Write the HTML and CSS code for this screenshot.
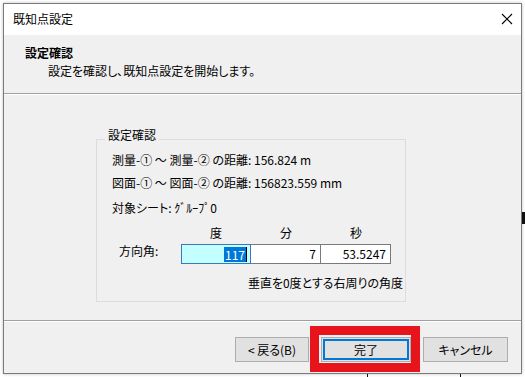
FILE: index.html
```html
<!DOCTYPE html>
<html lang="ja">
<head>
    <meta charset="UTF-8">
    <meta name="viewport" content="width=device-width, initial-scale=1.0">
    <title>既知点設定</title>
    <link rel="stylesheet" href="styles.css">
</head>
<body>
    <div class="desk-mark mark-right"></div>
    <div class="desk-mark mark-b1"></div>
    <div class="desk-mark mark-b2"></div>

    <div class="window">
        <div class="titlebar">
            <span class="title">既知点設定</span>
            <svg class="close" width="12" height="12" viewBox="0 0 12 12">
                <path d="M1 1 L11 11 M11 1 L1 11" stroke="#000" stroke-width="1.1" fill="none"/>
            </svg>
        </div>

        <div class="header">
            <div class="header-title">設定確認</div>
            <div class="header-sub">設定を確認し、既知点設定を開始します。</div>
        </div>

        <div class="content">
            <div class="group">
                <span class="legend">設定確認</span>
                <div class="row row1">測量-① ～ 測量-② の距離: 156.824 m</div>
                <div class="row row2">図面-① ～ 図面-② の距離: 156823.559 mm</div>
                <div class="row row3">対象シート: ｸﾞﾙｰﾌﾟ0</div>

                <div class="angle-grid">
                    <span></span>
                    <span class="col-head">度</span>
                    <span class="col-head">分</span>
                    <span class="col-head">秒</span>

                    <span class="angle-label">方向角:</span>
                    <div class="field field-active"><span class="sel">117</span><span class="caret"></span></div>
                    <div class="field">7</div>
                    <div class="field">53.5247</div>
                </div>

                <div class="note">垂直を0度とする右周りの角度</div>
            </div>
        </div>

        <div class="footer">
            <button class="btn btn-back">&lt; 戻る(B)</button>
            <div class="done-wrap">
                <button class="btn btn-done">完了</button>
                <div class="highlight"></div>
            </div>
            <button class="btn btn-cancel">キャンセル</button>
        </div>
    </div>
</body>
</html>
```

FILE: styles.css
```css
body {
    margin: 0;
    background: #fff;
    font-family: "Noto Sans CJK JP", "Noto Sans", sans-serif;
    font-size: 12px;
    font-feature-settings: "palt";
    color: #000;
    position: relative;
    height: 377px;
    overflow: hidden;
}
.desk-mark {
    position: absolute;
    background: #111;
}
.mark-right {
    left: 521px;
    top: 212px;
    width: 4px;
    height: 12px;
}
.mark-b1 {
    left: 367px;
    top: 373px;
    width: 1px;
    height: 4px;
}
.mark-b2 {
    left: 460px;
    top: 373px;
    width: 1px;
    height: 4px;
}
.window {
    position: relative;
    margin: 3px 0 0 3px;
    width: 517px;
    height: 369px;
    border: 1px solid #7a7a7a;
    background: #f0f0f0;
    box-shadow: 0 0 3px rgba(0, 0, 0, 0.25);
    display: flex;
    flex-direction: column;
}
.titlebar {
    height: 31px;
    flex-shrink: 0;
    background: #fff;
    display: flex;
    align-items: center;
    justify-content: space-between;
    padding: 0 8px 0 9px;
}
.title {
    line-height: 16px;
    margin-top: -2px;
}
.close {
    margin-top: -2px;
}
.header {
    height: 59px;
    flex-shrink: 0;
    box-sizing: border-box;
    padding: 10px 0 0 21px;
    border-bottom: 1px solid #a0a0a0;
    box-shadow: 0 1px 0 #fff;
}
.header-title {
    font-weight: bold;
    line-height: 16px;
}
.header-sub {
    line-height: 16px;
    margin: 2px 0 0 23px;
}
.content {
    flex: 1;
    padding-top: 45px;
}
.group {
    margin-left: 92px;
    width: 310px;
    height: 163px;
    box-sizing: border-box;
    border: 1px solid #dcdcdc;
    display: flex;
    flex-direction: column;
}
.legend {
    align-self: flex-start;
    margin: -12px 0 0 8px;
    padding: 0 3px;
    background: #f0f0f0;
    line-height: 14px;
}
.row {
    line-height: 16px;
    padding-left: 15px;
}
.row1 {
    margin-top: 10px;
}
.row2 {
    margin-top: 7px;
}
.row3 {
    margin-top: 9px;
}
.angle-grid {
    display: grid;
    grid-template-columns: 62px 70px 70px 70px;
    grid-template-rows: 16px 20px;
    row-gap: 3px;
    margin: 9px 0 0 22px;
}
.col-head {
    text-align: center;
    line-height: 16px;
}
.angle-label {
    line-height: 20px;
    margin-top: -3px;
}
.field {
    box-sizing: border-box;
    height: 20px;
    border: 1px solid #7a7a7a;
    background: #fff;
    padding-right: 4px;
    line-height: 18px;
    display: flex;
    justify-content: flex-end;
    align-items: center;
}
.field + .field {
    border-left: none;
}
.field-active {
    background: #c4ffff;
    border-color: #3a78c0;
    padding-right: 3px;
}
.sel {
    background: #0078d7;
    color: #fff;
    line-height: 15px;
    padding: 0 1px;
}
.caret {
    width: 1px;
    height: 15px;
    background: #000;
}
.note {
    line-height: 16px;
    margin-top: 11px;
    padding-right: 2px;
    text-align: right;
    white-space: nowrap;
}
.footer {
    height: 53px;
    flex-shrink: 0;
    box-sizing: border-box;
    border-top: 1px solid #a0a0a0;
    box-shadow: inset 0 1px 0 #fff;
    display: flex;
    justify-content: flex-end;
    align-items: flex-start;
    gap: 12px;
    padding: 16px 13px 0 0;
}
.btn {
    height: 25px;
    box-sizing: border-box;
    border: 1px solid #adadad;
    background: #e1e1e1;
    font-family: inherit;
    font-size: 12px;
    font-feature-settings: "palt";
    color: #000;
    padding: 0;
}
.btn-back {
    width: 74px;
}
.btn-done {
    width: 90px;
    box-shadow: inset 0 0 0 1px #e1e1e1, inset 0 0 0 3px #0078d7;
}
.btn-cancel {
    width: 85px;
}
.done-wrap {
    position: relative;
}
.highlight {
    position: absolute;
    left: -11px;
    top: -11px;
    width: 110px;
    height: 46px;
    box-sizing: border-box;
    border: 9px solid #e8141c;
}
```
